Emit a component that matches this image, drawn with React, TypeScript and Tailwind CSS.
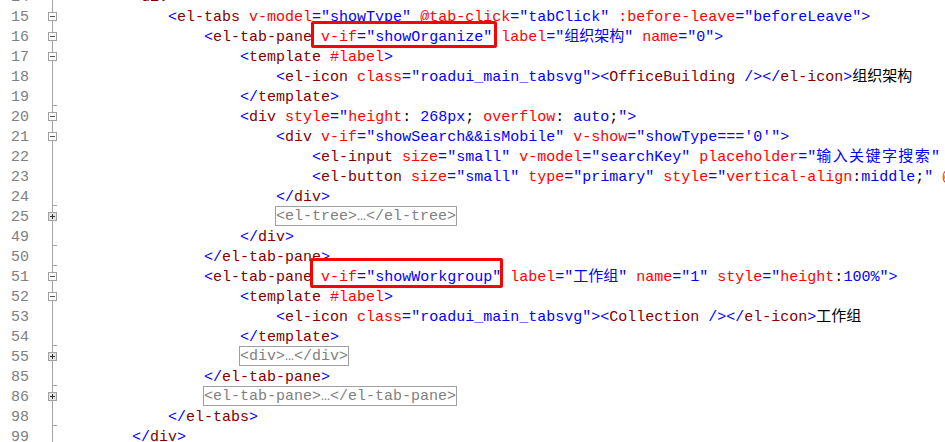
type Tok = [string, string];
type Box = { box: "a" | "b"; toks: Tok[] };
type Part = Tok | Box;
type Fold = "line" | "end" | "minus" | "plus";

type Line = { n: number; ind: number; f: Fold; toks: Part[] };

const colors: Record<string, string> = {
  d: "text-[#0000ff]",
  t: "text-[#800000]",
  a: "text-[#ff0000]",
  v: "text-[#0000ff]",
  p: "text-black",
  w: "text-[#0000ff] tracking-[1.4px]",
};

const lines: Line[] = [
  { n: 14, ind: 8, f: "line", toks: [["d", "<"], ["t", "div"], ["d", ">"]] },
  {
    n: 15,
    ind: 12,
    f: "minus",
    toks: [
      ["d", "<"], ["t", "el-tabs"], ["p", " "],
      ["a", "v-model"], ["d", "="], ["v", '"showType"'], ["p", " "],
      ["a", "@tab-click"], ["d", "="], ["v", '"tabClick"'], ["p", " "],
      ["a", ":before-leave"], ["d", "="], ["v", '"beforeLeave"'], ["d", ">"],
    ],
  },
  {
    n: 16,
    ind: 16,
    f: "minus",
    toks: [
      ["d", "<"], ["t", "el-tab-pane"], ["p", " "],
      { box: "a", toks: [["a", "v-if"], ["d", "="], ["v", '"showOrganize"']] },
      ["p", " "],
      ["a", "label"], ["d", "="], ["v", '"组织架构"'], ["p", " "],
      ["a", "name"], ["d", "="], ["v", '"0"'], ["d", ">"],
    ],
  },
  { n: 17, ind: 20, f: "minus", toks: [["d", "<"], ["t", "template"], ["p", " "], ["a", "#label"], ["d", ">"]] },
  {
    n: 18,
    ind: 24,
    f: "line",
    toks: [
      ["d", "<"], ["t", "el-icon"], ["p", " "], ["a", "class"], ["d", "="], ["v", '"roadui_main_tabsvg"'],
      ["d", "><"], ["t", "OfficeBuilding"], ["p", " "], ["d", "/></"], ["t", "el-icon"], ["d", ">"], ["p", "组织架构"],
    ],
  },
  { n: 19, ind: 20, f: "end", toks: [["d", "</"], ["t", "template"], ["d", ">"]] },
  {
    n: 20,
    ind: 20,
    f: "minus",
    toks: [
      ["d", "<"], ["t", "div"], ["p", " "], ["a", "style"], ["d", "="], ["v", '"'],
      ["a", "height"], ["p", ": "], ["v", "268px"], ["p", "; "], ["a", "overflow"], ["p", ": "], ["v", "auto"], ["p", ";"],
      ["v", '"'], ["d", ">"],
    ],
  },
  {
    n: 21,
    ind: 24,
    f: "minus",
    toks: [
      ["d", "<"], ["t", "div"], ["p", " "], ["a", "v-if"], ["d", "="], ["v", '"showSearch&&isMobile"'], ["p", " "],
      ["a", "v-show"], ["d", "="], ["v", "\"showType==='0'\""], ["d", ">"],
    ],
  },
  {
    n: 22,
    ind: 28,
    f: "line",
    toks: [
      ["d", "<"], ["t", "el-input"], ["p", " "], ["a", "size"], ["d", "="], ["v", '"small"'], ["p", " "],
      ["a", "v-model"], ["d", "="], ["v", '"searchKey"'], ["p", " "],
      ["a", "placeholder"], ["d", "="], ["v", '"'], ["w", "输入关键字搜索"], ["v", '"'], ["p", " "],
      ["a", "clearable"], ["p", " "], ["d", "/>"],
    ],
  },
  {
    n: 23,
    ind: 28,
    f: "line",
    toks: [
      ["d", "<"], ["t", "el-button"], ["p", " "], ["a", "size"], ["d", "="], ["v", '"small"'], ["p", " "],
      ["a", "type"], ["d", "="], ["v", '"primary"'], ["p", " "],
      ["a", "style"], ["d", "="], ["v", '"'], ["a", "vertical-align"], ["p", ":"], ["v", "middle"], ["p", ";"], ["v", '"'],
      ["p", " "], ["a", "@click"], ["d", "="], ["v", '"search"'], ["d", ">"],
    ],
  },
  { n: 24, ind: 24, f: "end", toks: [["d", "</"], ["t", "div"], ["d", ">"]] },
  { n: 25, ind: 24, f: "plus", toks: [["c", "<el-tree>…</el-tree>"]] },
  { n: 49, ind: 20, f: "end", toks: [["d", "</"], ["t", "div"], ["d", ">"]] },
  { n: 50, ind: 16, f: "end", toks: [["d", "</"], ["t", "el-tab-pane"], ["d", ">"]] },
  {
    n: 51,
    ind: 16,
    f: "minus",
    toks: [
      ["d", "<"], ["t", "el-tab-pane"], ["p", " "],
      { box: "b", toks: [["a", "v-if"], ["d", "="], ["v", '"showWorkgroup"']] },
      ["p", " "],
      ["a", "label"], ["d", "="], ["v", '"工作组"'], ["p", " "],
      ["a", "name"], ["d", "="], ["v", '"1"'], ["p", " "],
      ["a", "style"], ["d", "="], ["v", '"'], ["a", "height"], ["p", ":"], ["v", "100%"], ["v", '"'], ["d", ">"],
    ],
  },
  { n: 52, ind: 20, f: "minus", toks: [["d", "<"], ["t", "template"], ["p", " "], ["a", "#label"], ["d", ">"]] },
  {
    n: 53,
    ind: 24,
    f: "line",
    toks: [
      ["d", "<"], ["t", "el-icon"], ["p", " "], ["a", "class"], ["d", "="], ["v", '"roadui_main_tabsvg"'],
      ["d", "><"], ["t", "Collection"], ["p", " "], ["d", "/></"], ["t", "el-icon"], ["d", ">"], ["p", "工作组"],
    ],
  },
  { n: 54, ind: 20, f: "end", toks: [["d", "</"], ["t", "template"], ["d", ">"]] },
  { n: 55, ind: 20, f: "plus", toks: [["c", "<div>…</div>"]] },
  { n: 85, ind: 16, f: "end", toks: [["d", "</"], ["t", "el-tab-pane"], ["d", ">"]] },
  { n: 86, ind: 16, f: "plus", toks: [["c", "<el-tab-pane>…</el-tab-pane>"]] },
  { n: 98, ind: 12, f: "end", toks: [["d", "</"], ["t", "el-tabs"], ["d", ">"]] },
  { n: 99, ind: 8, f: "end", toks: [["d", "</"], ["t", "div"], ["d", ">"]] },
];

function FoldMark({ kind }: { kind: Fold }) {
  return (
    <svg width="30" height="20" viewBox="0 0 30 20" className="shrink-0">
      <path d="M22.5 0V20" stroke="#a5a5a5" strokeWidth="1" />
      {kind === "end" && <path d="M22.5 19.5H27" stroke="#a5a5a5" strokeWidth="1" />}
      {kind === "minus" && (
        <>
          <rect x="18.5" y="6.5" width="8" height="8" fill="#fff" stroke="#a0a0a0" />
          <path d="M20 10.5H25" stroke="#555" />
        </>
      )}
      {kind === "plus" && (
        <>
          <rect x="18.5" y="6.5" width="8" height="8" fill="#e4e4e4" stroke="#a0a0a0" />
          <path d="M20 10.5H25M22.5 8V13" stroke="#333" />
        </>
      )}
    </svg>
  );
}

function Tokens({ toks }: { toks: Part[] }) {
  return (
    <>
      {toks.map((tk, i) => {
        if (Array.isArray(tk)) {
          const [k, s] = tk;
          if (k === "c")
            return (
              <span
                key={i}
                className="-ml-px inline-block h-[20px] border border-[#a0a0a0] align-top leading-[20px] text-[#808080]"
              >
                {s}
              </span>
            );
          return (
            <span key={i} className={colors[k]}>
              {s}
            </span>
          );
        }
        return (
          <span key={i} className="relative inline-block h-[20px] align-top">
            <Tokens toks={tk.toks} />
            {tk.box === "a" ? (
              <span className="absolute -top-[5px] -bottom-[2px] -left-[10px] -right-[5px] rounded-[2px] border-[3px] border-[#ff0000]" />
            ) : (
              <span className="absolute -top-[8px] -bottom-[2px] -left-[11px] -right-[2px] rounded-[2px] border-[3px] border-[#ff0000]" />
            )}
          </span>
        );
      })}
    </>
  );
}

export default function App() {
  return (
    <div className="h-[442px] w-[945px] overflow-hidden bg-white font-['Liberation_Mono','Noto_Sans_CJK_SC',monospace] text-[15px] leading-[20px]">
      <div className="-mt-[14px]">
        {lines.map((l) => (
          <div key={l.n} className="flex h-[20px]">
            <div className="w-[30px] shrink-0 pr-px text-right leading-[24px] text-[#808080]">{l.n}</div>
            <FoldMark kind={l.f} />
            <div className="whitespace-pre leading-[24px]">
              {" ".repeat(l.ind)}
              <Tokens toks={l.toks} />
            </div>
          </div>
        ))}
      </div>
    </div>
  );
}
